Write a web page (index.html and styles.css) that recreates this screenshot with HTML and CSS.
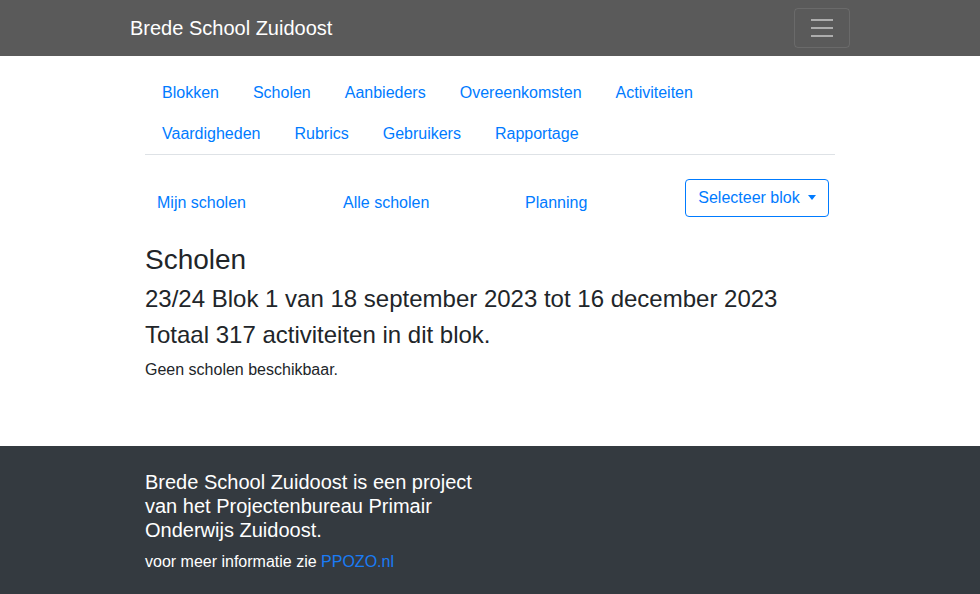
FILE: index.html
```html
<!DOCTYPE html>
<html lang="nl">
<head>
<meta charset="utf-8">
<title>Brede School Zuidoost</title>
<link rel="stylesheet" href="styles.css">
</head>
<body>
<header class="navbar">
  <div class="container navbar-inner">
    <a class="brand" href="#">Brede School Zuidoost</a>
    <button class="toggler" type="button" aria-label="Menu">
      <svg width="30" height="30" viewBox="0 0 30 30"><path d="M4 7h22M4 15h22M4 23h22" stroke="rgba(255,255,255,0.5)" stroke-width="2" stroke-linecap="butt" fill="none"/></svg>
    </button>
  </div>
</header>
<main class="container main">
  <ul class="mainnav">
    <li><a href="#">Blokken</a></li>
    <li><a href="#">Scholen</a></li>
    <li><a href="#">Aanbieders</a></li>
    <li><a href="#">Overeenkomsten</a></li>
    <li><a href="#">Activiteiten</a></li>
    <li><a href="#">Vaardigheden</a></li>
    <li><a href="#">Rubrics</a></li>
    <li><a href="#">Gebruikers</a></li>
    <li><a href="#">Rapportage</a></li>
  </ul>
  <div class="subrow">
    <div class="col"><a class="sublink s1" href="#">Mijn scholen</a></div>
    <div class="col"><a class="sublink s2" href="#">Alle scholen</a></div>
    <div class="col"><a class="sublink s3" href="#">Planning</a></div>
    <div class="col"><button class="btn-outline" type="button">Selecteer blok<span class="caret"></span></button></div>
  </div>
  <h3 class="title">Scholen</h3>
  <h4 class="sub">23/24 Blok 1 van 18 september 2023 tot 16 december 2023</h4>
  <h4 class="sub">Totaal 317 activiteiten in dit blok.</h4>
  <p class="text">Geen scholen beschikbaar.</p>
</main>
<footer class="footer">
  <div class="container">
    <div class="footer-col">
      <h5 class="footer-title">Brede School Zuidoost is een project van het Projectenbureau Primair Onderwijs Zuidoost.</h5>
      <p class="footer-text">voor meer informatie zie <a href="#">PPOZO.nl</a></p>
    </div>
  </div>
</footer>
</body>
</html>
```
FILE: styles.css
```css
* { box-sizing: border-box; }
html, body { margin: 0; padding: 0; }
body {
  font-family: "Liberation Sans", Arial, sans-serif;
  font-size: 16px;
  line-height: 1.5;
  color: #212529;
  background: #fff;
}
a { color: #007bff; text-decoration: none; }

.container {
  width: 720px;
  margin: 0 auto;
  padding: 0 15px;
}

.navbar {
  background: #5a5a5a;
  padding: 8px 0;
}
.navbar-inner {
  padding: 0;
  display: flex;
  align-items: center;
  justify-content: space-between;
}
.brand {
  color: #fff;
  font-size: 20px;
  line-height: 30px;
  padding: 5px 0;
}
.toggler {
  width: 56px;
  height: 40px;
  padding: 4px 12px;
  background: transparent;
  border: 1px solid rgba(255,255,255,0.1);
  border-radius: 4px;
  display: flex;
  align-items: center;
  justify-content: center;
}
.toggler svg { display: block; }

.main { padding: 16px 15px 16px; }

.mainnav {
  list-style: none;
  margin: 0;
  padding: 0;
  display: flex;
  flex-wrap: wrap;
  border-bottom: 1px solid #dee2e6;
}
.mainnav a {
  display: block;
  padding: 8px 17px;
  line-height: 25px;
}

.subrow {
  display: grid;
  grid-template-columns: repeat(4, 180px);
  margin: 24px -15px 0;
}
.subrow .col { padding: 0 15px; }
.sublink {
  display: inline-block;
  padding-top: 12px;
  line-height: 24px;
}
.s1 { padding-left: 12px; }
.s2 { padding-left: 18px; }
.s3 { padding-left: 20px; }

.btn-outline {
  font-family: inherit;
  font-size: 16px;
  line-height: 24px;
  color: #007bff;
  background: transparent;
  border: 1px solid #007bff;
  border-radius: 4px;
  padding: 6px 12px;
  display: inline-flex;
  align-items: center;
  width: 144px;
  justify-content: center;
}
.caret {
  display: inline-block;
  margin-left: 8px;
  width: 0;
  height: 0;
  border-top: 5px solid #007bff;
  border-left: 4px solid transparent;
  border-right: 4px solid transparent;
  margin-bottom: 2px;
}

.title {
  font-size: 28px;
  font-weight: 500;
  line-height: 1.2;
  margin: 26px 0 8px;
}
.sub {
  font-size: 24px;
  font-weight: 500;
  line-height: 1.2;
  margin: 0 0 8px;
}
.text { margin: 0 0 16px; }

.footer {
  margin-top: 32px;
  background: #343a40;
  color: #fff;
  padding: 24px 0 40px;
}
.footer-col { width: 330px; }
.footer-title {
  font-size: 20px;
  font-weight: 500;
  line-height: 1.2;
  margin: 0 0 8px;
}
.footer-text { margin: 0; }
.footer-text a { color: #1a7cf5; }
```
